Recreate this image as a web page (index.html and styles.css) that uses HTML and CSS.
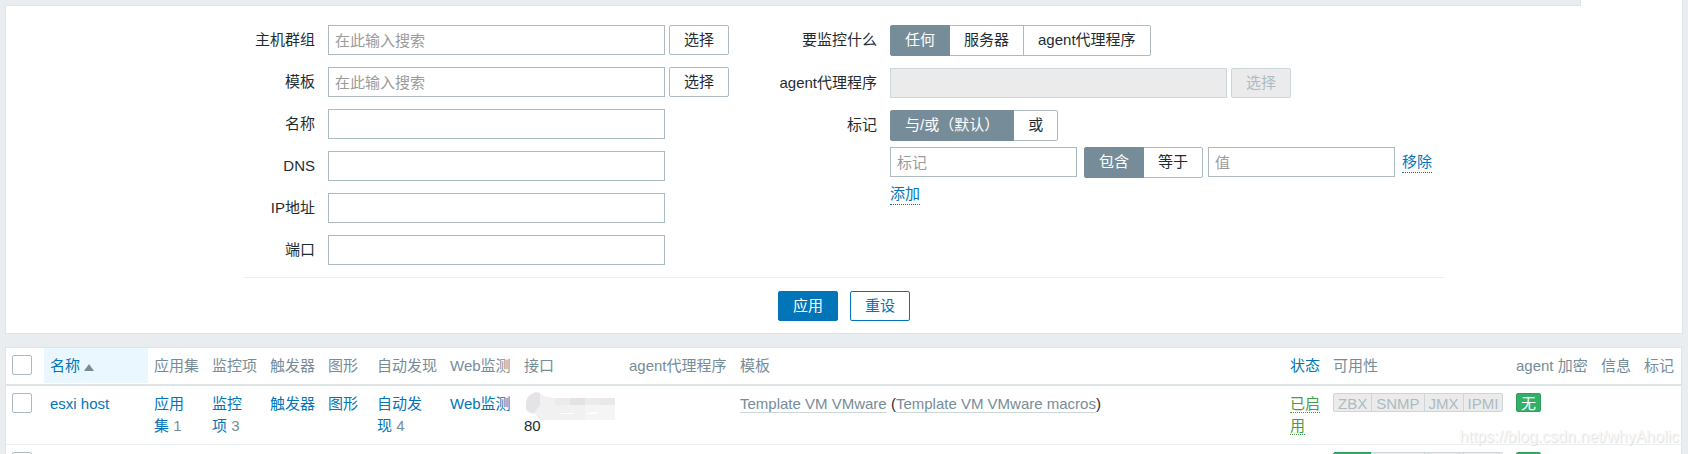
FILE: index.html
```html
<!DOCTYPE html>
<html lang="zh-CN">
  <head>
    <title>主机</title>
    <meta charset="utf-8">
    <link rel="stylesheet" href="styles.css">
  </head>
  <body>

  <div class="filter-tabs">
    <div class="filter-tabs-space"></div>
    <div class="filter-tab"></div>
  </div>

  <form class="filter">
    <div class="filter-forms">
      <div class="form-list">
        <label for="groups">主机群组</label>
        <div class="field"><input class="text wide" id="groups" type="text" placeholder="在此输入搜索"><button class="btn-grey" type="button">选择</button></div>
        <label for="templates">模板</label>
        <div class="field"><input class="text wide" id="templates" type="text" placeholder="在此输入搜索"><button class="btn-grey" type="button">选择</button></div>
        <label for="host">名称</label>
        <div class="field"><input class="text wide" id="host" type="text"></div>
        <label for="dns">DNS</label>
        <div class="field"><input class="text wide" id="dns" type="text"></div>
        <label for="ip">IP地址</label>
        <div class="field"><input class="text wide" id="ip" type="text"></div>
        <label for="port">端口</label>
        <div class="field"><input class="text wide" id="port" type="text"></div>
      </div>

      <div class="form-list form-list-right">
        <span class="form-label">要监控什么</span>
        <div class="radios">
          <input type="radio" name="monitored" id="mon-any" checked><label for="mon-any">任何</label>
          <input type="radio" name="monitored" id="mon-server"><label for="mon-server">服务器</label>
          <input type="radio" name="monitored" id="mon-proxy"><label for="mon-proxy">agent代理程序</label>
        </div>
        <label for="proxy">agent代理程序</label>
        <div class="field"><input class="text wide" id="proxy" type="text" disabled><button class="btn-grey" type="button" disabled>选择</button></div>
        <span class="form-label">标记</span>
        <div class="tags">
          <div class="radios">
            <input type="radio" name="evaltype" id="tag-andor" checked><label for="tag-andor">与/或（默认）</label>
            <input type="radio" name="evaltype" id="tag-or"><label for="tag-or">或</label>
          </div>
          <div class="tag-row">
            <input class="text tag" type="text" placeholder="标记" aria-label="标记">
            <div class="radios tag-operator">
              <input type="radio" name="operator" id="op-like" checked><label for="op-like">包含</label>
              <input type="radio" name="operator" id="op-equal"><label for="op-equal">等于</label>
            </div>
            <input class="text tag" type="text" placeholder="值" aria-label="值">
            <button class="btn-link tag-remove" type="button">移除</button>
          </div>
          <button class="btn-link" type="button">添加</button>
        </div>
      </div>
    </div>

    <div class="filter-buttons">
      <button class="btn" type="submit">应用</button>
      <button class="btn btn-alt" type="reset">重设</button>
    </div>
  </form>

  <table class="list-table">
    <colgroup>
      <col class="col-check"><col class="col-name"><col class="col-3"><col class="col-3"><col class="col-3">
      <col class="col-graphs"><col class="col-discovery"><col class="col-web"><col class="col-interface"><col class="col-proxy">
      <col><col class="col-2"><col class="col-avail"><col class="col-crypt"><col class="col-2"><col class="col-2">
    </colgroup>
    <thead>
      <tr>
        <th><input class="check" type="checkbox" aria-label="全选"></th>
        <th class="sorted"><a href="#">名称 <span class="arrow-up"></span></a></th>
        <th>应用集</th>
        <th>监控项</th>
        <th>触发器</th>
        <th>图形</th>
        <th>自动发现</th>
        <th>Web监测</th>
        <th>接口</th>
        <th>agent代理程序</th>
        <th>模板</th>
        <th><a href="#">状态</a></th>
        <th>可用性</th>
        <th>agent 加密</th>
        <th>信息</th>
        <th>标记</th>
      </tr>
    </thead>
    <tbody>
      <tr>
        <td><input class="check" type="checkbox" aria-label="esxi host"></td>
        <td><a href="#">esxi host</a></td>
        <td><a href="#">应用集</a>&nbsp;<span class="grey">1</span></td>
        <td><a href="#">监控项</a>&nbsp;<span class="grey">3</span></td>
        <td><a href="#">触发器</a></td>
        <td><a href="#">图形</a></td>
        <td><a href="#">自动发现</a>&nbsp;<span class="grey">4</span></td>
        <td><a href="#">Web监测</a></td>
        <td>
          <!-- masked address -->
          <svg class="mask" width="92" height="28" viewBox="0 0 92 28">
            <path fill="#f1f1f2" d="M2 10 Q4 2 12 0 Q17 1 20 4 L30 6 H89 Q91 6 91 8 V26 Q91 28 89 28 H16 L11 22 Q3 22 2 16Z"/>
            <path fill="#e4e4e6" d="M2 10 Q4 2 12 0 L16 1 V13 L10 21 Q3 21 2 16Z"/>
            <path fill="#ebebec" d="M31 6 H46 V13 H31Z M61 6 H76 V13 H61Z"/>
            <path fill="#e3e3e6" d="M46 6 H61 V13 H46Z"/>
            <path fill="#e9e9ea" d="M76 6 H91 V13 H76Z"/>
            <path fill="#f5f5f5" d="M61 13 H91 V28 H61Z"/>
            <path fill="#fff" d="M35 21 H50 V22 H35Z M63 21 L75 20 L72 22 H63Z"/>
          </svg>
          80
        </td>
        <td></td>
        <td><a class="link-alt" href="#">Template VM VMware</a> (<a class="link-alt" href="#">Template VM VMware macros</a>)</td>
        <td><a class="enabled" href="#">已启用</a></td>
        <td><div class="status"><span>ZBX</span><span>SNMP</span><span>JMX</span><span>IPMI</span></div></td>
        <td><div class="status"><span class="green">无</span></div></td>
        <td></td>
        <td></td>
      </tr>
      <tr>
        <td><input class="check" type="checkbox" aria-label="主机"></td>
        <td></td>
        <td></td>
        <td></td>
        <td></td>
        <td></td>
        <td></td>
        <td></td>
        <td></td>
        <td></td>
        <td></td>
        <td></td>
        <td><div class="status"><span class="green">ZBX</span><span>SNMP</span><span>JMX</span><span>IPMI</span></div></td>
        <td><div class="status"><span class="green">无</span></div></td>
        <td></td>
        <td></td>
      </tr>
    </tbody>
  </table>

  <div class="watermark">https://blog.csdn.net/whyAholic</div>

  </body>
</html>
```

FILE: styles.css
```css
* {
  box-sizing: border-box;
}
html {
  height: 100%;
}
body {
  position: relative;
  height: 100%;
  margin: 0;
  padding: 0 5px;
  overflow: hidden;
  background: #e9edf0;
  color: #1f2c33;
  font-family: "Liberation Sans", "Noto Sans CJK SC", sans-serif;
  font-size: 15px;
  line-height: 22px;
}
input, button {
  margin: 0;
  font: inherit;
  color: inherit;
}
a {
  color: #0275b8;
  text-decoration: none;
}

/* filter */
.filter-tabs {
  display: flex;
  height: 6px;
}
.filter-tabs-space {
  flex: 1;
  border: solid #dfe4e7;
  border-width: 0 1px 1px 0;
}
.filter-tab {
  width: 102px;
  background: #fff;
  border-right: 1px solid #dfe4e7;
}
.filter {
  padding: 19px 0 12px;
  background: #fff;
  border: 1px solid #dfe4e7;
  border-top: 0;
}
.filter-forms {
  display: grid;
  grid-template-columns: 526px 1fr;
  max-width: 1200px;
  margin: 0 auto;
  padding-bottom: 12px;
  border-bottom: 1px solid #ebeef0;
}
.form-list {
  display: grid;
  grid-template-columns: 71px 1fr;
  gap: 12px 13px;
  align-content: start;
}
.form-list-right {
  grid-template-columns: 107px 1fr;
}
.form-list > label, .form-label {
  line-height: 30px;
  height: 30px;
  text-align: right;
  white-space: nowrap;
}
.field {
  display: flex;
  gap: 4px;
}
.text {
  height: 30px;
  padding: 0 6px;
  background: #fff;
  border: 1px solid #acbbc2;
  border-radius: 0;
}
.text::placeholder {
  color: #9b9b9b;
  opacity: 1;
}
.wide {
  width: 337px;
}
.tag {
  width: 187px;
}
.btn-grey, .btn {
  height: 30px;
  padding: 0 14px;
  border: 1px solid #acbbc2;
  border-radius: 2px;
  background: #fff;
  line-height: 28px;
}
.text:disabled, .btn-grey:disabled {
  background: #ebebeb;
  border-color: #ccd5d9;
  color: #acbbc2;
}

.radios {
  display: flex;
}
.radios input {
  position: absolute;
  opacity: 0;
}
.radios label {
  height: 31px;
  margin-left: -1px;
  padding: 0 14px;
  border: 1px solid #acbbc2;
  line-height: 28px;
  white-space: nowrap;
}
.radios label:first-of-type {
  margin-left: 0;
  border-radius: 2px 0 0 2px;
}
.radios label:last-of-type {
  border-radius: 0 2px 2px 0;
}
.radios input:checked + label {
  position: relative;
  background: #768d99;
  border-color: #768d99;
  color: #fff;
}
.tag-row {
  display: flex;
  margin: 6px 0;
}
.tag-operator {
  margin: 0 5px 0 7px;
}
.btn-link {
  display: block;
  height: 21px;
  padding: 0;
  background: none;
  border: 0;
  border-bottom: 1px dotted #0275b8;
  color: #0275b8;
  line-height: 20px;
}
.tag-remove {
  margin: 5px 0 0 7px;
}

.filter-buttons {
  display: flex;
  justify-content: center;
  gap: 12px;
  margin-top: 13px;
}
.btn {
  background: #0275b8;
  border-color: #0275b8;
  color: #fff;
}
.btn-alt {
  background: #fff;
  color: #0275b8;
}

/* host list */
.list-table {
  width: calc(100% - 1px);
  margin-top: 13px;
  table-layout: fixed;
  border-collapse: separate;
  border-spacing: 0;
  background: #fff;
  border: 1px solid #dfe4e7;
}
.col-check { width: 38px; }
.col-name { width: 104px; }
.col-3 { width: 58px; }
.col-graphs { width: 49px; }
.col-discovery { width: 73px; }
.col-web { width: 74px; }
.col-interface { width: 105px; }
.col-proxy { width: 111px; }
.col-2 { width: 43px; }
.col-avail { width: 183px; }
.col-crypt { width: 85px; }

.list-table th, .list-table td {
  padding: 7px 6px;
  text-align: left;
  vertical-align: top;
  border-bottom: 1px solid #ebeef0;
}
.list-table th {
  border-bottom: 2px solid #dfe4e7;
  color: #768d99;
  font-weight: normal;
  white-space: nowrap;
}
.list-table th.sorted {
  padding: 0 0 1px;
}
.sorted a {
  display: block;
  padding: 7px 6px 6px;
  background: #ebf7ff;
}
.arrow-up {
  display: inline-block;
  border: 5px solid transparent;
  border-top: 0;
  border-bottom: 7px solid #768d99;
}
.check {
  display: block;
  width: 20px;
  height: 20px;
  appearance: none;
  background: #fff;
  border: 1px solid #acbbc2;
  border-radius: 2px;
}
.grey {
  color: #768d99;
}
.link-alt {
  color: #768d99;
  border-bottom: 1px solid #ccd5d9;
}
.enabled {
  color: #429e47;
  border-bottom: 1px dotted #429e47;
}
.mask {
  display: block;
  margin: -1px 0 -5px;
}
.status {
  display: flex;
}
.status span {
  height: 19px;
  margin-left: -1px;
  padding: 0 4px;
  background: #ebebeb;
  border: 1px solid #ccd5d9;
  color: #acbbc2;
  line-height: 19px;
}
.status span:first-child {
  margin-left: 0;
  border-radius: 2px 0 0 2px;
}
.status span:last-child {
  border-radius: 0 2px 2px 0;
}
.status span:only-child {
  border-radius: 2px;
}
.status .green {
  background: #34af67;
  border-color: #2f9f5e;
  color: #fff;
}

.watermark {
  position: absolute;
  right: 9px;
  bottom: 6px;
  color: #f8f8f8;
  font-size: 16px;
  text-shadow: 1px 1px 1px #ddd;
}
```
